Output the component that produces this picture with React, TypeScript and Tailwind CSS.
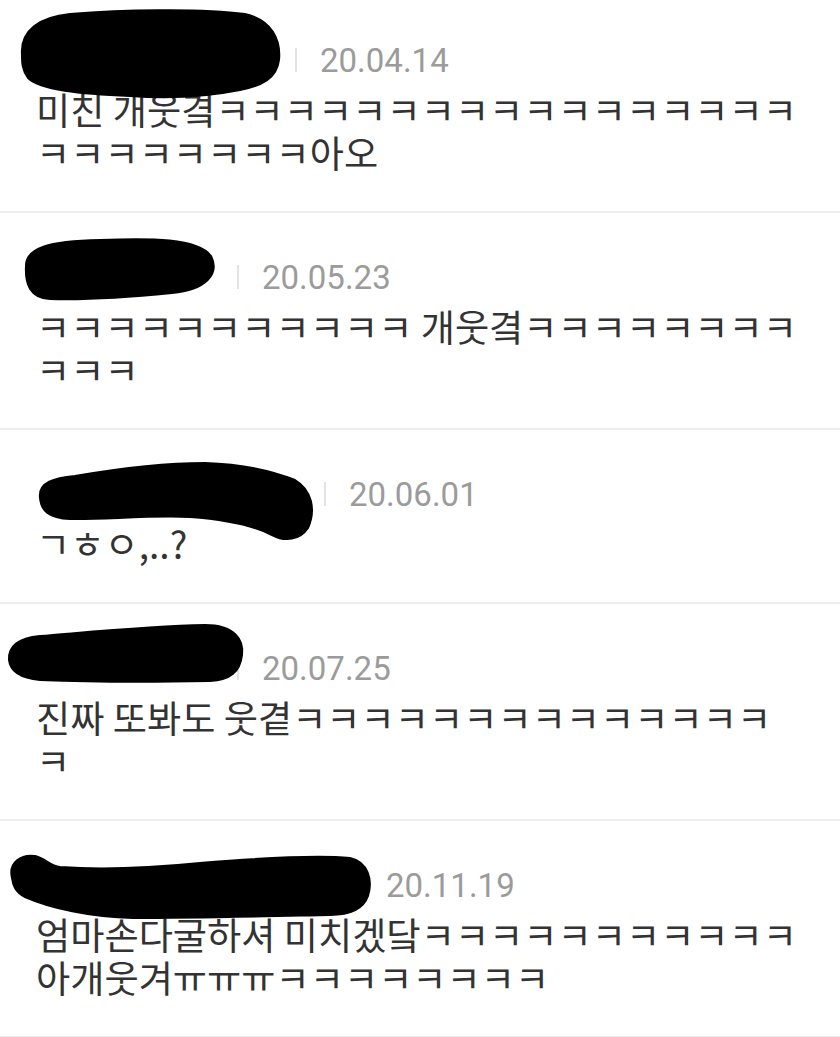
import React from "react";

type Comment = {
  nameW: string;
  date: string;
  lines: string[];
};

const comments: Comment[] = [
  {
    nameW: "w-[259px]",
    date: "20.04.14",
    lines: ["미친 개웃곀ㅋㅋㅋㅋㅋㅋㅋㅋㅋㅋㅋㅋㅋㅋㅋㅋㅋ", "ㅋㅋㅋㅋㅋㅋㅋㅋ아오"],
  },
  {
    nameW: "w-[201px]",
    date: "20.05.23",
    lines: ["ㅋㅋㅋㅋㅋㅋㅋㅋㅋㅋㅋ 개웃곀ㅋㅋㅋㅋㅋㅋㅋㅋ", "ㅋㅋㅋ"],
  },
  {
    nameW: "w-[288px]",
    date: "20.06.01",
    lines: ["ㄱㅎㅇ,..?"],
  },
  {
    nameW: "w-[201px]",
    date: "20.07.25",
    lines: ["진짜 또봐도 웃곁ㅋㅋㅋㅋㅋㅋㅋㅋㅋㅋㅋㅋㅋㅋ", "ㅋ"],
  },
  {
    nameW: "w-[325px]",
    date: "20.11.19",
    lines: ["엄마손다굴하셔 미치겠닼ㅋㅋㅋㅋㅋㅋㅋㅋㅋㅋㅋ", "아개웃겨ㅠㅠㅠㅋㅋㅋㅋㅋㅋㅋㅋ"],
  },
];

// marker scribbles hiding the nicknames (page coordinates)
const blobs = [
  "M 22 55 C 20 30, 40 17, 70 14 C 120 10, 200 8, 245 14 C 272 20, 281 40, 279 60 C 277 78, 262 86, 240 90 C 210 96, 170 99, 130 96 C 80 94, 40 90, 28 78 C 22 70, 22 62, 22 55 Z",
  "M 26 266 C 26 248, 48 241, 100 240 C 150 238, 198 238, 211 256 C 220 274, 206 290, 172 293 C 132 297, 82 300, 50 299 C 30 298, 25 284, 26 266 Z",
  "M 40 498 C 38 482, 55 478, 75 476 C 110 470, 160 463, 205 463 C 240 464, 270 470, 295 480 C 312 490, 316 510, 308 528 C 300 540, 285 542, 272 535 C 255 526, 230 520, 190 517 C 150 515, 100 520, 70 519 C 48 518, 41 510, 40 498 Z",
  "M 9 660 C 8 645, 20 638, 40 636 C 90 632, 150 626, 205 625 C 235 625, 244 640, 242 655 C 240 672, 230 680, 210 681 C 160 682, 90 682, 40 680 C 18 678, 10 670, 9 660 Z",
  "M 12 878 C 8 862, 22 854, 35 856 C 45 858, 50 866, 60 867 C 100 870, 150 868, 200 863 C 260 858, 320 855, 350 858 C 368 862, 373 880, 368 896 C 363 910, 350 915, 330 915 C 280 916, 200 918, 133 918 C 90 917, 50 908, 25 897 C 15 892, 13 885, 12 878 Z",
];

const CommentRow = ({ c, first }: { c: Comment; first?: boolean }) => (
  <div className={`pl-[36px] pr-[40px] pt-[44px] pb-[37px] border-b-2 border-[#eeeeee] ${first ? "-mt-1" : ""}`}>
    <div className="flex items-center h-10">
      <div className={`${c.nameW} h-8 shrink-0`}></div>
      <div className="w-[2px] h-[24px] bg-[#e3e3e3] shrink-0"></div>
      <span className="ml-[23px] text-[33px] leading-none text-[#9b9b9b] font-['Roboto',sans-serif]">
        {c.date}
      </span>
    </div>
    <div className="mt-2 text-[37.2px] leading-[43px] text-[#333333] font-['Noto_Sans_CJK_KR','Noto_Sans',sans-serif]">
      {c.lines.map((l, i) => (
        <div key={i} className="whitespace-nowrap">
          {l}
        </div>
      ))}
    </div>
  </div>
);

export default function App() {
  return (
    <div className="relative w-[840px] h-[1037px] bg-white overflow-hidden">
      {comments.map((c, i) => (
        <CommentRow key={i} c={c} first={i === 0} />
      ))}
      <svg
        className="absolute inset-0 pointer-events-none"
        width="840"
        height="1037"
        viewBox="0 0 840 1037"
      >
        {blobs.map((d, i) => (
          <path key={i} d={d} fill="#000" stroke="#000" strokeWidth="2" strokeLinejoin="round" />
        ))}
      </svg>
    </div>
  );
}
